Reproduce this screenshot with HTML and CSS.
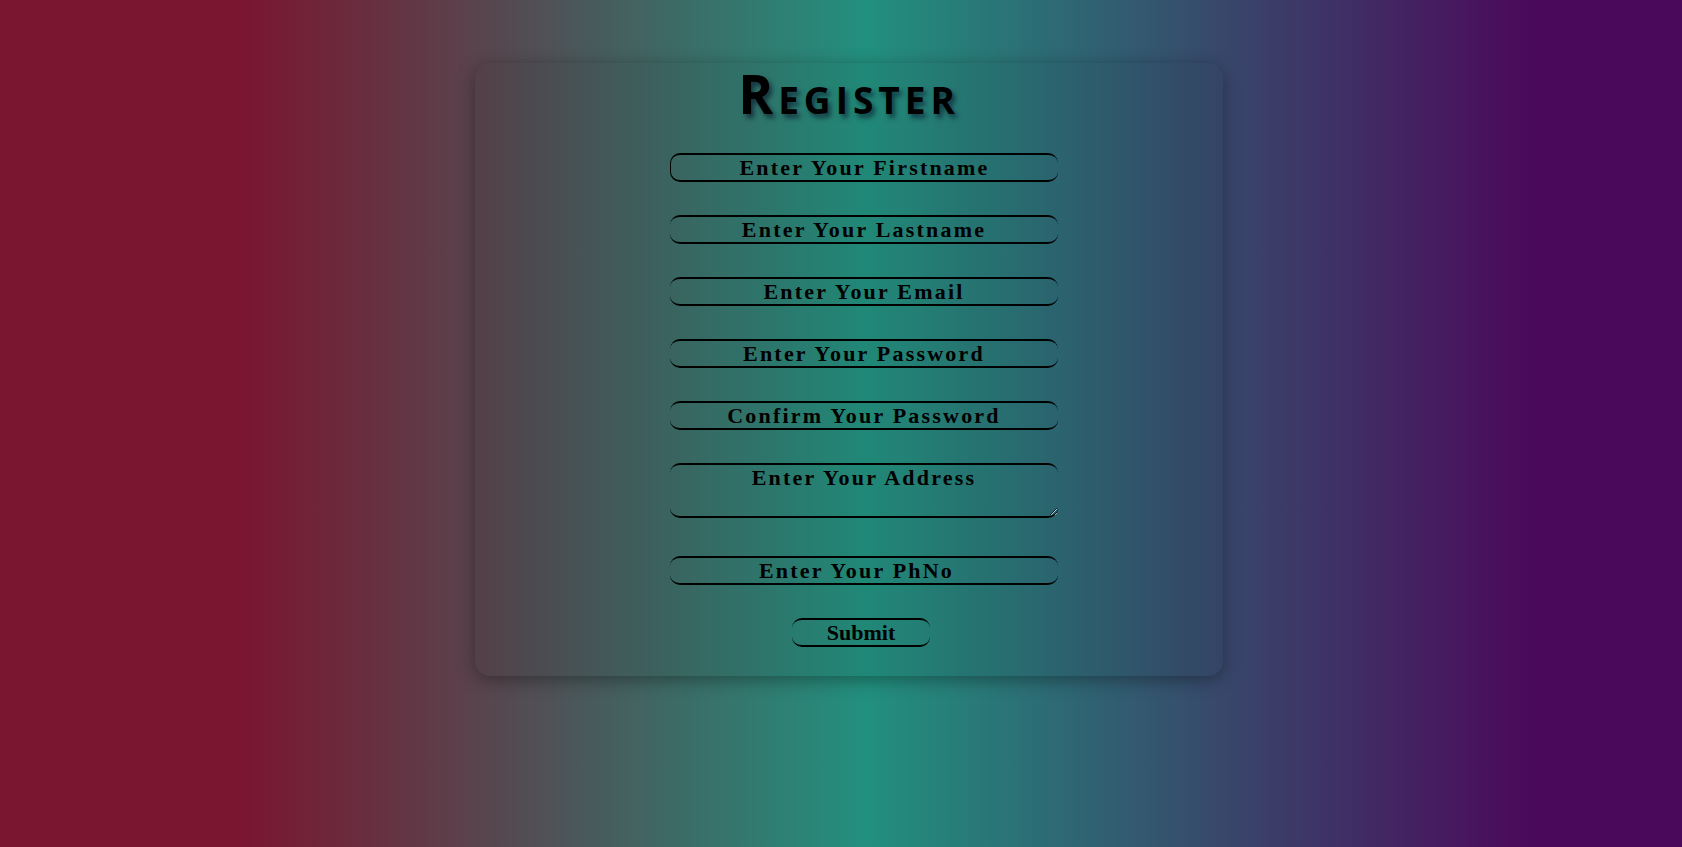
FILE: index.html
```html
<!DOCTYPE html>
<html lang="en">
<head>
<meta charset="utf-8">
<title>Register</title>
<link rel="stylesheet" href="styles.css">
</head>
<body>
<div class="page">
  <div class="card">
    <h1 class="title">Register</h1>
    <form class="form">
      <input class="field field-first" type="text" placeholder="Enter Your Firstname">
      <input class="field" type="text" placeholder="Enter Your Lastname">
      <input class="field" type="email" placeholder="Enter Your Email">
      <input class="field" type="password" placeholder="Enter Your Password">
      <input class="field" type="password" placeholder="Confirm Your Password">
      <textarea class="field area" placeholder="Enter Your Address"></textarea>
      <input class="field" type="number" placeholder="Enter Your PhNo">
      <button class="submit" type="button">Submit</button>
    </form>
  </div>
</div>
</body>
</html>
```
FILE: styles.css
```css
html, body {
  margin: 0;
  height: 100%;
}
body {
  background: linear-gradient(90deg, #7a1630 0%, #7a1630 14.5%, #22907e 51.5%, #4b095b 91%, #4b095b 100%);
  font-family: "Liberation Serif", "Times New Roman", serif;
}
.page {
  display: flex;
  justify-content: center;
  padding: 63px 0 0 16px;
}
.card {
  width: 748px;
  box-sizing: border-box;
  padding: 1px 0 29px;
  border-radius: 15px;
  background: rgba(0, 0, 0, 0.05);
  box-shadow: 0 4px 18px rgba(0, 0, 0, 0.35);
  display: flex;
  flex-direction: column;
  align-items: center;
}
.title {
  margin: 0;
  font-family: "Open Sans", "DejaVu Sans", sans-serif;
  font-weight: 700;
  font-size: 53px;
  line-height: 60px;
  font-variant: small-caps;
  letter-spacing: 5px;
  color: #000;
  text-shadow: 3px 4px 5px rgba(0, 0, 30, 0.55);
}
.form {
  margin-top: 29px;
  padding-left: 30px;
  display: flex;
  flex-direction: column;
  align-items: center;
}
.field {
  width: 388px;
  height: 29px;
  box-sizing: border-box;
  margin: 0 0 33px;
  padding: 0;
  background: transparent;
  border: none;
  border-top: 2px solid #000;
  border-bottom: 2px solid #000;
  border-radius: 10px;
  font-family: "Liberation Serif", "Times New Roman", serif;
  font-weight: bold;
  font-size: 22px;
  letter-spacing: 2.2px;
  text-align: center;
  color: #000;
  outline: none;
}
.field-first {
  border-left: 1px solid #000;
}
.field::placeholder {
  color: #000;
  opacity: 1;
}
.area {
  height: 55px;
  margin-bottom: 38px;
  display: block;
}
.submit {
  width: 138px;
  height: 29px;
  box-sizing: border-box;
  margin: 0 6px 0 0;
  padding: 0;
  background: transparent;
  border: none;
  border-top: 2px solid #000;
  border-bottom: 2px solid #000;
  border-radius: 10px;
  font-family: "Liberation Serif", "Times New Roman", serif;
  font-weight: bold;
  font-size: 22px;
  color: #000;
}
```
